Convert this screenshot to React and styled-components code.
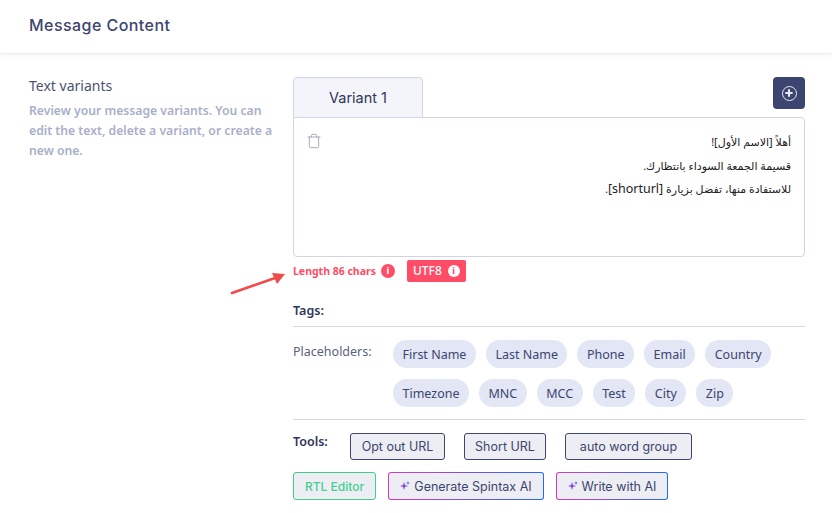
import React from "react"
import styled, { createGlobalStyle } from "styled-components"
import { Plus, Trash } from "lucide-react"

const GlobalStyle = createGlobalStyle`
  html, body {
    margin: 0;
    padding: 0;
    background: #fff;
    overflow: hidden;
  }
  * { box-sizing: border-box; }
`

const Page = styled.div`
  position: relative;
  width: 832px;
  height: 513px;
  overflow: hidden;
  font-family: "Noto Sans", sans-serif;
  color: #3c4570;
`

const Header = styled.div`
  height: 53px;
  padding: 15px 29px 0;
  box-shadow: 0 1px 4px rgba(60, 70, 110, 0.14);
`

const Title = styled.h1`
  margin: 0;
  font-family: Inter, sans-serif;
  font-size: 16px;
  line-height: 20px;
  font-weight: 500;
  letter-spacing: 0.45px;
  color: #3c4570;
`

const Body = styled.div`
  display: flex;
  padding: 24px 27px 0 29px;
`

const Side = styled.div`
  width: 264px;
  flex-shrink: 0;
  padding-right: 18px;
`

const SideTitle = styled.div`
  font-size: 14px;
  line-height: 20px;
  margin-top: -1px;
  margin-bottom: 5px;
  color: #4a5272;
`

const SideText = styled.div`
  font-size: 12.2px;
  line-height: 20px;
  font-weight: 600;
  color: #a9afc9;
`

const Main = styled.div`
  flex: 1;
  min-width: 0;
`

const TabRow = styled.div`
  display: flex;
  justify-content: space-between;
  align-items: flex-start;
  height: 40px;
`

const Tab = styled.div`
  width: 130px;
  height: 41px;
  display: flex;
  align-items: center;
  justify-content: center;
  position: relative;
  z-index: 1;
  background: #f4f5fa;
  border: 1px solid #d0d4e4;
  border-radius: 4px 4px 0 0;
  font-family: Inter, sans-serif;
  font-size: 14.5px;
  color: #2e3658;
`

const AddButton = styled.button`
  width: 32px;
  height: 32px;
  padding: 0;
  display: flex;
  align-items: center;
  justify-content: center;
  border: none;
  border-radius: 4px;
  background: #3c4570;
`

const AddRing = styled.span`
  width: 15px;
  height: 15px;
  border: 1.5px solid #e8eaf3;
  border-radius: 50%;
  display: flex;
  align-items: center;
  justify-content: center;
  color: #e8eaf3;
`

const Editor = styled.div`
  height: 140px;
  display: flex;
  justify-content: space-between;
  padding: 12px 13px 0 12px;
  border: 1px solid #d0d4e4;
  border-radius: 0 4px 4px 4px;
  background: #fff;
`

const TrashIcon = styled(Trash)`
  margin-top: 3px;
  color: #a5abbd;
`

const Message = styled.div`
  direction: rtl;
  text-align: right;
  font-family: "Noto Sans", "DejaVu Sans", sans-serif;
  font-size: 11px;
  line-height: 23.5px;
  color: #222;
`

const Latin = styled.span`
  font-size: 12.5px;
`

const StatusRow = styled.div`
  display: flex;
  align-items: center;
  height: 27px;
`

const Length = styled.span`
  display: flex;
  align-items: center;
  gap: 5px;
  font-size: 10.5px;
  font-weight: 700;
  color: #ff4d67;
`

const Info = styled.span`
  width: ${(p) => (p.$inverse ? 12 : 14)}px;
  height: ${(p) => (p.$inverse ? 12 : 14)}px;
  border-radius: 50%;
  display: inline-flex;
  align-items: center;
  justify-content: center;
  font-size: 9px;
  font-weight: 800;
  color: ${(p) => (p.$inverse ? "#ff4d67" : "#fff")};
  background: ${(p) => (p.$inverse ? "#fff" : "#ff4d67")};
`

const Badge = styled.span`
  display: flex;
  align-items: center;
  gap: 6px;
  height: 22px;
  margin-left: 12px;
  padding: 0 6px;
  border-radius: 2px;
  background: #ff4d67;
  color: #fff;
  font-size: 12px;
  font-weight: 500;
`

const Section = styled.div`
  display: flex;
  align-items: flex-start;
  border-bottom: ${(p) => (p.$divider ? "1px solid #d5d8e6" : "none")};
`

const TagsHead = styled(Section)`
  height: 31px;
  margin-top: 12px;
  padding-top: 5px;
`

const Strong = styled.span`
  font-size: 12.5px;
  line-height: 20px;
  font-weight: 600;
  color: #2e3658;
`

const Placeholders = styled(Section)`
  height: 93px;
  padding-top: 13px;
`

const PlaceholderLabel = styled.span`
  width: 100px;
  flex-shrink: 0;
  font-size: 12.5px;
  line-height: 24px;
  color: #5a6180;
`

const Pills = styled.div`
  display: flex;
  flex-wrap: wrap;
  gap: 11px 10px;
  width: 400px;
`

const Pill = styled.span`
  height: 28px;
  padding: 0 9.5px;
  display: flex;
  align-items: center;
  border-radius: 14px;
  background: #e2e6f5;
  font-size: 12.5px;
  color: #3c4570;
`

const ToolRow = styled.div`
  display: flex;
  align-items: center;
  gap: ${(p) => p.$gap}px;
  margin-top: ${(p) => p.$top}px;
`

const ToolsLabel = styled(Strong)`
  width: 38px;
  margin-top: -10px;
`

const ToolButton = styled.button`
  height: 27px;
  padding: 0;
  width: ${(p) => p.$w}px;
  border: 1px solid #3c4570;
  border-radius: 3px;
  background: #eceef3;
  font-family: Inter, sans-serif;
  font-size: 12.5px;
  color: #3c4570;
`

const RtlButton = styled(ToolButton)`
  height: 28px;
  border-color: #3ecf8e;
  color: #45cf92;
  font-size: 12px;
  font-weight: 500;
`

const AiButton = styled.button`
  height: 28px;
  width: ${(p) => p.$w}px;
  padding: 0;
  display: flex;
  align-items: center;
  justify-content: center;
  gap: 4px;
  border: 1px solid transparent;
  border-radius: 3px;
  background: linear-gradient(#eceef3, #eceef3) padding-box,
    linear-gradient(90deg, #d63ac0, #1f6bff) border-box;
  font-family: Inter, sans-serif;
  font-size: 12.5px;
  color: #3c4570;
`

const Arrow = styled.svg`
  position: absolute;
  left: 228px;
  top: 270px;
`

const Sparkle = () => (
  <svg width="10" height="10" viewBox="0 0 10 10">
    <path d="M4 1 L5 4 L8 5 L5 6 L4 9 L3 6 L0 5 L3 4 Z" fill="#8a4fe0" />
    <path d="M8 0 L8.5 1.5 L10 2 L8.5 2.5 L8 4 L7.5 2.5 L6 2 L7.5 1.5 Z" fill="#3b6cf0" />
  </svg>
)

const placeholders = [
  "First Name",
  "Last Name",
  "Phone",
  "Email",
  "Country",
  "Timezone",
  "MNC",
  "MCC",
  "Test",
  "City",
  "Zip",
]

const App = () => {
  return (
    <Page>
      <GlobalStyle />
      <Header>
        <Title>Message Content</Title>
      </Header>
      <Body>
        <Side>
          <SideTitle>Text variants</SideTitle>
          <SideText>
            Review your message variants. You can edit the text, delete a
            variant, or create a new one.
          </SideText>
        </Side>
        <Main>
          <TabRow>
            <Tab>Variant 1</Tab>
            <AddButton>
              <AddRing>
                <Plus size={10} strokeWidth={5} />
              </AddRing>
            </AddButton>
          </TabRow>
          <Editor>
            <TrashIcon size={16} strokeWidth={1.5} />
            <Message>
              <div>أهلاً [الاسم الأول]!</div>
              <div>قسيمة الجمعة السوداء بانتظارك.</div>
              <div>
                للاستفادة منها، تفضل بزيارة <Latin>[shorturl]</Latin>.
              </div>
            </Message>
          </Editor>
          <StatusRow>
            <Length>
              Length 86 chars <Info>i</Info>
            </Length>
            <Badge>
              UTF8 <Info $inverse>i</Info>
            </Badge>
          </StatusRow>
          <TagsHead $divider>
            <Strong>Tags:</Strong>
          </TagsHead>
          <Placeholders $divider>
            <PlaceholderLabel>Placeholders:</PlaceholderLabel>
            <Pills>
              {placeholders.map((name) => (
                <Pill key={name}>{name}</Pill>
              ))}
            </Pills>
          </Placeholders>
          <ToolRow $gap={19} $top={13}>
            <ToolsLabel>Tools:</ToolsLabel>
            <ToolButton $w={95}>Opt out URL</ToolButton>
            <ToolButton $w={82}>Short URL</ToolButton>
            <ToolButton $w={127}>auto word group</ToolButton>
          </ToolRow>
          <ToolRow $gap={12} $top={12}>
            <RtlButton $w={83}>RTL Editor</RtlButton>
            <AiButton $w={156}>
              <Sparkle /> Generate Spintax AI
            </AiButton>
            <AiButton $w={112}>
              <Sparkle /> Write with AI
            </AiButton>
          </ToolRow>
        </Main>
      </Body>
      <Arrow width="60" height="28" viewBox="0 0 60 28">
        <path d="M4 23 L47 8" stroke="#f04a4a" strokeWidth="2.5" strokeLinecap="round" />
        <path d="M57 4 L44 3 L49 14 Z" fill="#f04a4a" />
      </Arrow>
    </Page>
  )
}

export default App
